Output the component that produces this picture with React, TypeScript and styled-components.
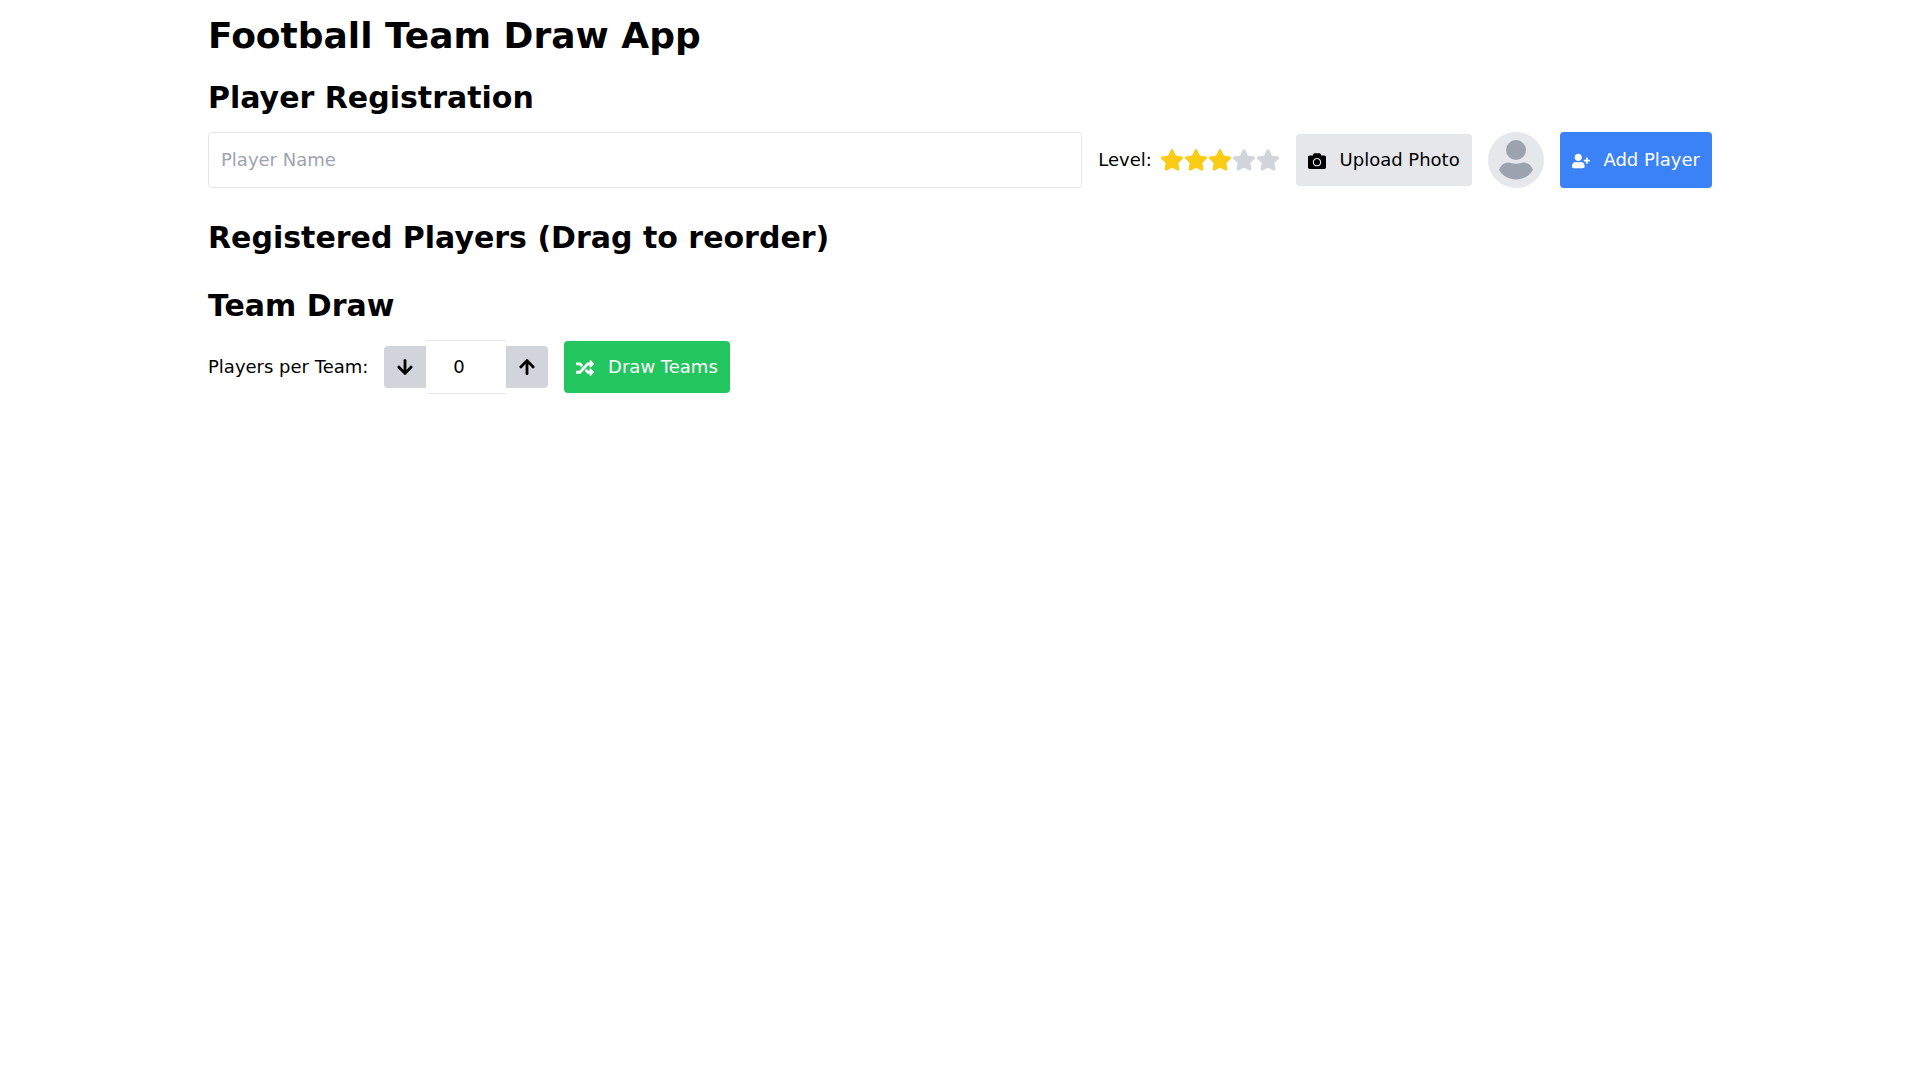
import React, { useState } from "react";
import styled, { createGlobalStyle } from "styled-components";
import { FaArrowDown, FaArrowUp, FaCamera, FaRandom, FaStar, FaUserPlus } from "react-icons/fa";

const GlobalStyle = createGlobalStyle`
  *, *::before, *::after { box-sizing: border-box; }
  body {
    margin: 0;
    background: #fff;
    color: #000;
    font-family: "DejaVu Sans", sans-serif;
    font-size: 18px;
    line-height: 28px;
  }
  button, input { font: inherit; color: inherit; margin: 0; }
`;

const Page = styled.main`
  max-width: 1536px;
  margin: 0 auto;
  padding: 16px;
`;

const Title = styled.h1`
  margin: 0 0 24px;
  font-size: 36px;
  line-height: 40px;
  font-weight: 700;
`;

const Section = styled.section`
  margin-bottom: 32px;
`;

const Heading = styled.h2`
  margin: 0 0 16px;
  font-size: 30px;
  line-height: 36px;
  font-weight: 700;
`;

const PlayerList = styled.ul`
  list-style: none;
  margin: 0;
  padding: 0;
`;

const Row = styled.form<{ $stretch?: boolean }>`
  display: flex;
  align-items: ${(p) => (p.$stretch ? "stretch" : "center")};
  gap: 16px;
`;

const Group = styled.div`
  display: flex;
  align-items: center;
`;

const NameInput = styled.input`
  flex: 1;
  min-width: 0;
  padding: 12px;
  border: 1px solid #e5e7eb;
  border-radius: 4px;
  background: #fff;
  &::placeholder { color: #9ca3af; opacity: 1; }
`;

const LevelLabel = styled.span`
  margin-right: 8px;
`;

const StarButton = styled.button<{ $on: boolean }>`
  display: flex;
  padding: 0;
  border: 0;
  background: none;
  font-size: 24px;
  cursor: pointer;
  color: ${(p) => (p.$on ? "#facc15" : "#d1d5db")};
`;

const ActionButton = styled.button<{ $bg: string; $color: string }>`
  padding: 12px;
  border: 0;
  border-radius: 4px;
  background: ${(p) => p.$bg};
  color: ${(p) => p.$color};
  white-space: nowrap;
  cursor: pointer;
  svg {
    margin-right: 8px;
    vertical-align: middle;
  }
`;

const Avatar = styled.svg`
  display: block;
  flex: none;
  width: 56px;
  height: 56px;
`;

const StepButton = styled.button<{ $side: "left" | "right" }>`
  display: flex;
  padding: 12px;
  border: 0;
  border-radius: ${(p) => (p.$side === "left" ? "4px 0 0 4px" : "0 4px 4px 0")};
  background: #d1d5db;
  cursor: pointer;
`;

const CountInput = styled.input`
  width: 80px;
  padding: 12px;
  border: solid #e5e7eb;
  border-width: 1px 0;
  background: #fff;
  text-align: center;
`;

export default function App() {
  const [name, setName] = useState("");
  const [level, setLevel] = useState(3);
  const [perTeam, setPerTeam] = useState(0);
  const [players, setPlayers] = useState<string[]>([]);

  const addPlayer = (e: React.FormEvent) => {
    e.preventDefault();
    if (!name.trim()) return;
    setPlayers([...players, name.trim()]);
    setName("");
  };

  return (
    <Page>
      <GlobalStyle />
      <Title>Football Team Draw App</Title>

      <Section>
        <Heading>Player Registration</Heading>
        <Row $stretch onSubmit={addPlayer}>
          <NameInput
            type="text"
            aria-label="Player Name"
            placeholder="Player Name"
            value={name}
            onChange={(e) => setName(e.target.value)}
          />
          <Group role="group" aria-labelledby="level-label">
            <LevelLabel id="level-label">Level:</LevelLabel>
            {[1, 2, 3, 4, 5].map((n) => (
              <StarButton key={n} type="button" aria-label={`Level ${n}`} $on={n <= level} onClick={() => setLevel(n)}>
                <FaStar />
              </StarButton>
            ))}
          </Group>
          <Group>
            <ActionButton type="button" $bg="#e5e7eb" $color="#000">
              <FaCamera /> Upload Photo
            </ActionButton>
          </Group>
          <Avatar viewBox="0 0 56 56" aria-hidden="true">
            <circle cx="28" cy="28" r="28" fill="#e5e7eb" />
            <circle cx="28" cy="18" r="10" fill="#9ca3af" />
            <path
              d="M11 38C12.500 33.500 16 30.500 20.500 30.500C23 30.500 24.500 31.800 28 31.800C31.500 31.800 33 30.500 35.500 30.500C40 30.500 43.500 33.500 45 38A20 20 0 0 1 11 38Z"
              fill="#9ca3af"
            />
          </Avatar>
          <ActionButton type="submit" $bg="#3b82f6" $color="#fff">
            <FaUserPlus /> Add Player
          </ActionButton>
        </Row>
      </Section>

      <Section>
        <Heading>Registered Players (Drag to reorder)</Heading>
        <PlayerList>
          {players.map((p, i) => (
            <li key={i} draggable>{p}</li>
          ))}
        </PlayerList>
      </Section>

      <Section>
        <Heading>Team Draw</Heading>
        <Row onSubmit={(e) => e.preventDefault()}>
          <label htmlFor="per-team">Players per Team:</label>
          <Group>
            <StepButton type="button" $side="left" aria-label="Fewer players" onClick={() => setPerTeam(Math.max(0, perTeam - 1))}>
              <FaArrowDown />
            </StepButton>
            <CountInput
              id="per-team"
              type="number"
              min={0}
              value={perTeam}
              onChange={(e) => setPerTeam(Number(e.target.value))}
            />
            <StepButton type="button" $side="right" aria-label="More players" onClick={() => setPerTeam(perTeam + 1)}>
              <FaArrowUp />
            </StepButton>
          </Group>
          <ActionButton type="submit" $bg="#22c55e" $color="#fff">
            <FaRandom /> Draw Teams
          </ActionButton>
        </Row>
      </Section>
    </Page>
  );
}
